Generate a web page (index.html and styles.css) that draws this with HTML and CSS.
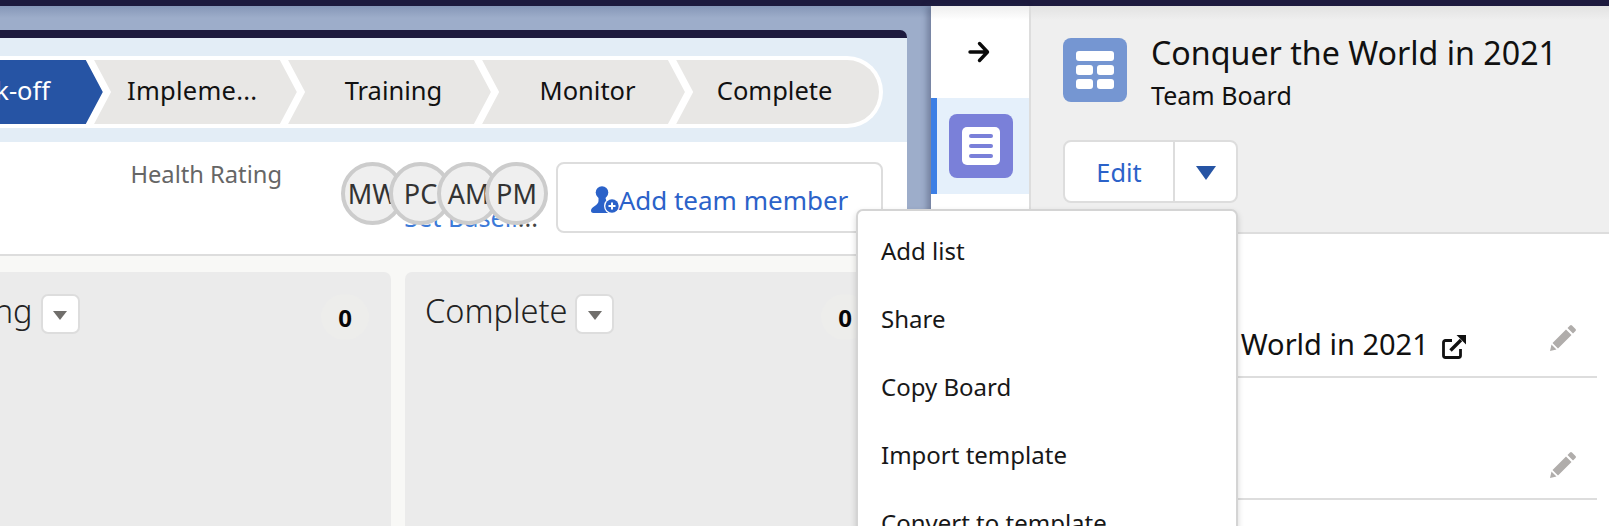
FILE: index.html
```html
<!DOCTYPE html>
<html lang="en">
<head>
<meta charset="utf-8">
<title>Conquer the World in 2021</title>
<link rel="stylesheet" href="styles.css">
</head>
<body>
<div class="topbar"></div>
<div class="workspace">
  <main class="board-area">
    <section class="card">
      <div class="path-band">
        <div class="path">
          <div class="step step-active">Kick-off</div>
          <div class="step step-trunc">Impleme...</div>
          <div class="step">Training</div>
          <div class="step">Monitor</div>
          <div class="step step-last">Complete</div>
        </div>
      </div>
      <div class="summary">
        <div class="health">Health Rating</div>
        <div class="team-stack">
          <a class="baseline-link">Set Baseli<span class="dots">...</span></a>
          <div class="avatars">
            <span class="avatar">MW</span>
            <span class="avatar">PC</span>
            <span class="avatar">AM</span>
            <span class="avatar">PM</span>
          </div>
        </div>
        <button class="add-member">
          <svg class="add-icon" viewBox="0 0 28 28" width="28" height="28" aria-hidden="true">
            <circle cx="11" cy="6.500" r="6.300" fill="#2b62c9"/>
            <path d="M7.500 11h7c0 2.500 1 4 3 5.500l1 10.500H2.500C.5 27 0 26 0 24.500c0-4 7.500-5 7.500-9.500z" fill="#2b62c9"/>
            <circle cx="21" cy="20" r="8" fill="#fff"/>
            <circle cx="21" cy="20" r="6.700" fill="#2b62c9"/>
            <path d="M21 16.500v7M17.500 20h7" stroke="#fff" stroke-width="2"/>
          </svg>
          <span>Add team member</span>
        </button>
      </div>
      <div class="lists">
        <div class="list list-clipped">
          <div class="list-head">
            <span class="list-title">Training</span>
            <span class="list-menu"><i class="tri-grey"></i></span>
            <span class="count">0</span>
          </div>
        </div>
        <div class="list">
          <div class="list-head">
            <span class="list-title">Complete</span>
            <span class="list-menu"><i class="tri-grey"></i></span>
            <span class="count">0</span>
          </div>
        </div>
      </div>
    </section>
  </main>

  <nav class="rail">
    <div class="rail-top">
      <svg viewBox="0 0 22 22" width="22" height="22" aria-hidden="true">
        <path d="M2 11h17M11.500 2.500 19.500 11l-8 8.500" fill="none" stroke="#0a0a0a" stroke-width="3.400" stroke-linecap="round" stroke-linejoin="round"/>
      </svg>
    </div>
    <div class="rail-item">
      <div class="rail-icon">
        <div class="note"><i></i><i></i><i></i></div>
      </div>
    </div>
  </nav>

  <aside class="detail">
    <header class="detail-head">
      <div class="record">
        <div class="record-icon">
          <i class="cell-wide"></i><i></i><i></i><i></i><i></i>
        </div>
        <div class="record-text">
          <div class="record-title">Conquer the World in 2021</div>
          <div class="record-sub">Team Board</div>
        </div>
      </div>
      <div class="btn-group">
        <button class="btn-edit">Edit</button>
        <button class="btn-more"><i class="tri-blue"></i></button>
      </div>
    </header>
    <div class="fields">
      <div class="field field-first">
        <span class="field-value">Conquer the World in 2021</span>
        <svg class="ext-icon" viewBox="0 0 26 26" width="26" height="26" aria-hidden="true">
          <path d="M11 6.500H4.500a2 2 0 0 0-2 2v13a2 2 0 0 0 2 2h13a2 2 0 0 0 2-2V15" fill="none" stroke="#111" stroke-width="2.800"/>
          <path d="M9.500 16.500 20 6" stroke="#111" stroke-width="3.400"/>
          <path d="M15.500 1h9.500v9.500z" fill="#111"/>
        </svg>
        <svg class="pencil" viewBox="0 0 26 26" width="26" height="26" aria-hidden="true">
          <path d="M20 .5a1.500 1.500 0 0 1 2 0l3.500 3.500a1.500 1.500 0 0 1 0 2L23 8.500 17.500 3zM16 4.500 21.500 10 8 23.500 2.500 18zM1.500 19.500l5 5L0 26z" fill="#b0adab"/>
        </svg>
      </div>
      <div class="field">
        <svg class="pencil" viewBox="0 0 26 26" width="26" height="26" aria-hidden="true">
          <path d="M20 .5a1.500 1.500 0 0 1 2 0l3.500 3.500a1.500 1.500 0 0 1 0 2L23 8.500 17.500 3zM16 4.500 21.500 10 8 23.500 2.500 18zM1.500 19.500l5 5L0 26z" fill="#b0adab"/>
        </svg>
      </div>
    </div>
  </aside>
</div>

<ul class="menu">
  <li>Add list</li>
  <li>Share</li>
  <li>Copy Board</li>
  <li>Import template</li>
  <li>Convert to template</li>
</ul>
</body>
</html>
```

FILE: styles.css
```css
* { box-sizing: border-box; }
html, body { height: 526px; overflow: hidden; }
body {
  margin: 0;
  position: relative;
  background: linear-gradient(#8697b8 6px, #9dadca 18px);
  font-family: "Noto Sans", "Open Sans", sans-serif;
  color: #111;
}
.topbar { height: 6px; background: #1d1a3e; }
.workspace { display: flex; height: 520px; }

/* board */
.board-area { flex: 0 0 931px; padding: 24px 24px 0 0; min-width: 0; }
.card {
  display: flex;
  flex-direction: column;
  height: 100%;
  width: 1011px;
  margin-left: -104px;
  background: #fff;
  border-top: 8px solid #1d1a3e;
  border-top-right-radius: 7px;
  overflow: hidden;
}
.path-band { background: #e3edf6; padding: 18px 24px 14px 0; }
.path { display: flex; background: #fff; padding: 4px; border-radius: 0 36px 36px 0; height: 72px; }
.step {
  flex: 0 0 202.800px;
  min-width: 0;
  display: flex;
  align-items: center;
  justify-content: center;
  padding: 0 0 4px 8px;
  margin-left: -8.750px;
  background: #e8e7e5;
  font-size: 25.500px;
  white-space: nowrap;
  clip-path: polygon(0 0, calc(100% - 17px) 0, 100% 50%, calc(100% - 17px) 100%, 0 100%, 17px 50%);
}
.step:first-child { margin-left: 0; }
.step-active { background: #2654a4; color: #fff; }
.step-trunc { justify-content: flex-start; padding-left: 33px; letter-spacing: .25px; }
.step-last {
  padding-right: 14px;
  border-radius: 0 32px 32px 0;
  clip-path: polygon(0 0, 100% 0, 100% 100%, 0 100%, 17px 50%);
}
.summary {
  display: flex;
  align-items: flex-start;
  justify-content: flex-end;
  height: 114px;
  padding: 20px 24px 0 0;
  border-bottom: 2px solid #ddd;
}
.health { font-size: 23.700px; line-height: 24px; color: #666; margin-right: 59px; }
.team-stack { display: grid; width: 207px; height: 64px; margin-right: 8px; }
.team-stack > * { grid-area: 1 / 1; }
.baseline-link {
  align-self: end;
  justify-self: end;
  margin: 0 10px -4px 0;
  font-size: 25.200px;
  line-height: 26px;
  white-space: nowrap;
  color: #3c7ad8;
}
.dots { color: #444; }
.avatars { display: flex; }
.avatar {
  flex: 0 0 63px;
  height: 63px;
  margin-right: -15px;
  display: flex;
  align-items: center;
  justify-content: center;
  border: 4px solid #ccc;
  border-radius: 50%;
  background: #efefef;
  color: #333;
  font-size: 27px;
  white-space: nowrap;
  overflow: hidden;
}
.add-member {
  display: flex;
  align-items: flex-end;
  justify-content: center;
  width: 327px;
  height: 71px;
  padding: 0 0 14px;
  background: #fff;
  border: 2px solid #ddd;
  border-radius: 8px;
  color: #2b62c9;
  font: 26px/34px "Noto Sans", sans-serif;
}
.add-icon { margin-bottom: 3px; }
.lists {
  flex: 1;
  display: flex;
  gap: 14px;
  padding: 16px 0 0 9px;
  background: #f8f8f6;
}
.list { flex: 0 0 486px; background: #ebebeb; border-radius: 7px 7px 0 0; }
.list-head { display: flex; align-items: flex-start; padding: 22px 22px 0 20px; }
.list-clipped .list-head { padding-left: 9px; }
.list-title { font-size: 32.500px; line-height: 34px; font-weight: 300; color: #222; margin-right: 8px; }
.list-menu {
  display: flex;
  align-items: center;
  justify-content: center;
  width: 39px;
  height: 40px;
  padding-top: 3px;
  background: #fff;
  border: 2px solid #ddd;
  border-radius: 7px;
}
.tri-grey { border: 7px solid transparent; border-top: 9px solid #706e6b; border-bottom: 0; }
.count {
  margin-left: auto;
  width: 48px;
  height: 46px;
  display: flex;
  align-items: center;
  justify-content: center;
  border-radius: 50%;
  background: #ededeb;
  font-size: 24px;
  font-weight: 700;
  color: #080707;
}

/* rail */
.rail {
  flex: 0 0 100px;
  background: linear-gradient(#eee, #fff 14px);
  border-right: 2px solid #ddd;
  box-shadow: -4px 0 6px rgba(40, 50, 80, .35);
  position: relative;
}
.rail-top { height: 92px; display: flex; align-items: center; justify-content: center; padding: 0 2px 0 0; }
.rail-item {
  height: 96px;
  display: flex;
  align-items: center;
  padding-left: 12px;
  background: #e5f0fb;
  border-left: 6px solid #3c7fe5;
}
.rail-icon {
  width: 64px;
  height: 64px;
  display: flex;
  align-items: center;
  justify-content: center;
  background: #7a80d9;
  border-radius: 8px;
}
.note {
  width: 38px;
  height: 38px;
  display: flex;
  flex-direction: column;
  justify-content: center;
  gap: 5.500px;
  padding: 0 7px;
  background: #fff;
  border-radius: 5px;
}
.note i { height: 4.500px; background: #7a80d9; border-radius: 2px; }

/* detail */
.detail { flex: 1; min-width: 0; background: #fff; position: relative; }
.detail-head {
  height: 228px;
  padding: 32px 0 0 32px;
  background: linear-gradient(#e2e2e2, #efefef 14px);
  border-bottom: 2px solid #ddd;
}
.record { display: flex; gap: 24px; height: 102px; }
.record-icon {
  width: 64px;
  height: 64px;
  display: grid;
  grid-template-columns: 17px 17px;
  grid-auto-rows: 10.500px;
  gap: 3.500px;
  align-content: center;
  justify-content: center;
  background: #7596d2;
  border-radius: 8px;
}
.record-icon i { background: #fff; border-radius: 3px; }
.record-icon .cell-wide { grid-column: 1 / 3; }
.record-text { margin-top: -4px; white-space: nowrap; }
.record-title { font-size: 32.200px; line-height: 38px; }
.record-sub { font-size: 25px; line-height: 34px; margin-top: 6px; }
.btn-group {
  display: flex;
  width: 175px;
  height: 63px;
  background: #fff;
  border: 2px solid #ddd;
  border-radius: 8px;
}
.btn-edit, .btn-more { background: none; border: 0; padding: 0; display: flex; align-items: center; justify-content: center; }
.btn-edit { width: 110px; border-right: 2px solid #ddd; color: #2b62c9; font: 25.300px "Noto Sans", sans-serif; }
.btn-more { flex: 1; padding-top: 3px; }
.tri-blue { border: 10.500px solid transparent; border-top: 14px solid #2654a4; border-bottom: 0; }
.fields { padding: 0 12px 0 32px; }
.field {
  display: flex;
  align-items: flex-start;
  height: 122px;
  padding-top: 74px;
  border-bottom: 2px solid #ddd;
}
.field-first { height: 144px; padding-top: 92px; }
.field-value { font-size: 29px; line-height: 36px; white-space: nowrap; }
.ext-icon { margin: 8px 0 0 12px; }
.pencil { margin-left: auto; margin-right: 21px; }
.field-first .pencil { margin-top: -1px; }

/* menu */
.menu {
  position: absolute;
  left: 856px;
  top: 209px;
  width: 382px;
  height: 340px;
  margin: 0;
  padding: 6px 0 0 23px;
  list-style: none;
  background: #fff;
  border: 2px solid #d4d4d4;
  border-radius: 7px;
  box-shadow: 0 3px 6px rgba(0, 0, 0, .16);
  font-size: 24px;
  line-height: 68px;
  color: #181818;
}
```
